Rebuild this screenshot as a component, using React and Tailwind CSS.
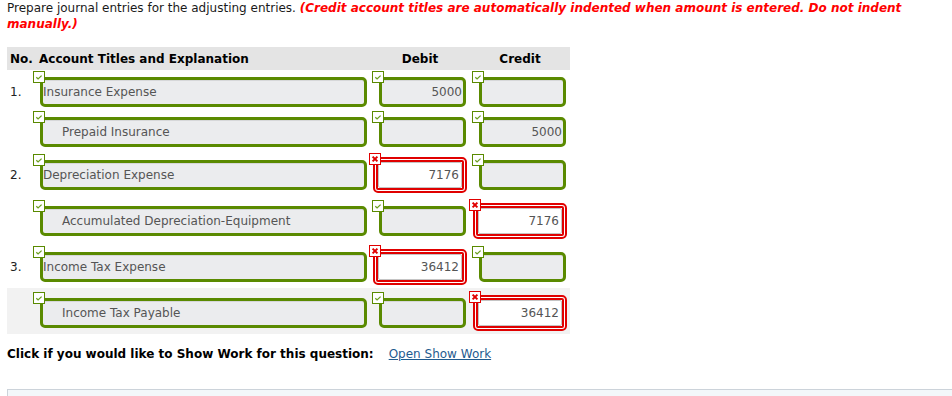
import React from 'react';

const rows = [
  { no: '1.', title: 'Insurance Expense', debit: { value: '5000', ok: true }, credit: { value: '', ok: true } },
  { title: 'Prepaid Insurance', indent: true, debit: { value: '', ok: true }, credit: { value: '5000', ok: true } },
  { no: '2.', title: 'Depreciation Expense', debit: { value: '7176', ok: false }, credit: { value: '', ok: true } },
  { title: 'Accumulated Depreciation-Equipment', indent: true, debit: { value: '', ok: true }, credit: { value: '7176', ok: false } },
  { no: '3.', title: 'Income Tax Expense', debit: { value: '36412', ok: false }, credit: { value: '', ok: true } },
  { title: 'Income Tax Payable', indent: true, shaded: true, debit: { value: '', ok: true }, credit: { value: '36412', ok: false } },
];

const Mark = ({ ok, className }) => (
  <span
    className={`absolute w-[12px] h-[12px] bg-white border ${ok ? 'border-[#5a8a00]' : 'border-[#e00000]'} ${className}`}
  >
    <svg width="10" height="10" viewBox="0 0 10 10" className="block">
      {ok ? (
        <path d="M2.3 5.2 L4.1 6.9 L7.6 3.6" fill="none" stroke="#6b9e1f" strokeWidth="1.3" />
      ) : (
        <path d="M2.6 2.6 L7.4 7.4 M7.4 2.6 L2.6 7.4" fill="none" stroke="#e00000" strokeWidth="2" />
      )}
    </svg>
  </span>
);

const GreenField = ({ value, width, indent, right }) => (
  <div className="relative">
    <div
      className={`h-[30px] ${width} border-[3px] border-[#5a8a00] rounded-[5px] bg-[#ebecee] shadow-[inset_0_1px_0_#d6d7d9] flex items-center text-[12px] text-[#555] ${
        right ? 'justify-end pr-[1px]' : indent ? 'pl-[19px]' : 'pl-0'
      }`}
    >
      {value}
    </div>
    <Mark ok className="left-[-7px] top-[-6px]" />
  </div>
);

const AmountCell = ({ cell }) =>
  cell.ok ? (
    <div className="w-[100px] pl-[9px] flex items-center">
      <GreenField value={cell.value} width="w-[87px]" right />
    </div>
  ) : (
    <div className="w-[100px] pl-[3px] flex items-center">
      <div className="relative">
        <div className="w-[94px] h-[36px] border-[5px] border-double border-[#e00000] rounded-[5px] bg-white">
          <div className="h-full border border-[#c4c4c4] rounded-[2px] bg-white flex items-center justify-end pr-[2px] text-[12px] text-[#555]">
            {cell.value}
          </div>
        </div>
        <Mark className="left-[-4px] top-[-4px]" />
      </div>
    </div>
  );

export default function App() {
  return (
    <div className="h-[396px] overflow-hidden bg-white pl-[7px] font-['DejaVu_Sans',Verdana,sans-serif] text-[12px] leading-[16px] text-[#1a1a1a]">
      <p>
        <span className="whitespace-nowrap">
          Prepare journal entries for the adjusting entries.{' '}
          <b className="italic text-[#ff0000]">
            (Credit account titles are automatically indented when amount is entered. Do not indent
          </b>
        </span>
        <br />
        <b className="italic text-[#ff0000]">manually.)</b>
      </p>

      <div className="mt-[15px] w-[563px]">
        <div className="flex items-center h-[23px] bg-[#e4e4e4] font-bold text-black">
          <div className="w-[32px] pl-[3px]">No.</div>
          <div className="w-[331px]">Account Titles and Explanation</div>
          <div className="w-[100px] text-center">Debit</div>
          <div className="w-[100px] text-center">Credit</div>
        </div>

        {rows.map((row, i) => (
          <div key={i} className={`flex items-center pt-[7px] pb-[3px] ${row.shaded ? 'bg-[#f2f2f2]' : ''}`}>
            <div className="w-[26px] pl-[3px] text-[#222]">{row.no}</div>
            <div className="w-[337px] pl-[7px] flex items-center">
              <GreenField value={row.title} width="w-[327px]" indent={row.indent} />
            </div>
            <AmountCell cell={row.debit} />
            <AmountCell cell={row.credit} />
          </div>
        ))}
      </div>

      <div className="mt-[12px] flex items-center">
        <span className="font-bold text-black">Click if you would like to Show Work for this question:</span>
        <a href="#" className="ml-[15px] text-[#1f5b8f] underline">
          Open Show Work
        </a>
      </div>

      <div className="mt-[27px] h-[30px] border-t border-l border-[#ccd3da] bg-[#f3f7fa]" />
    </div>
  );
}
